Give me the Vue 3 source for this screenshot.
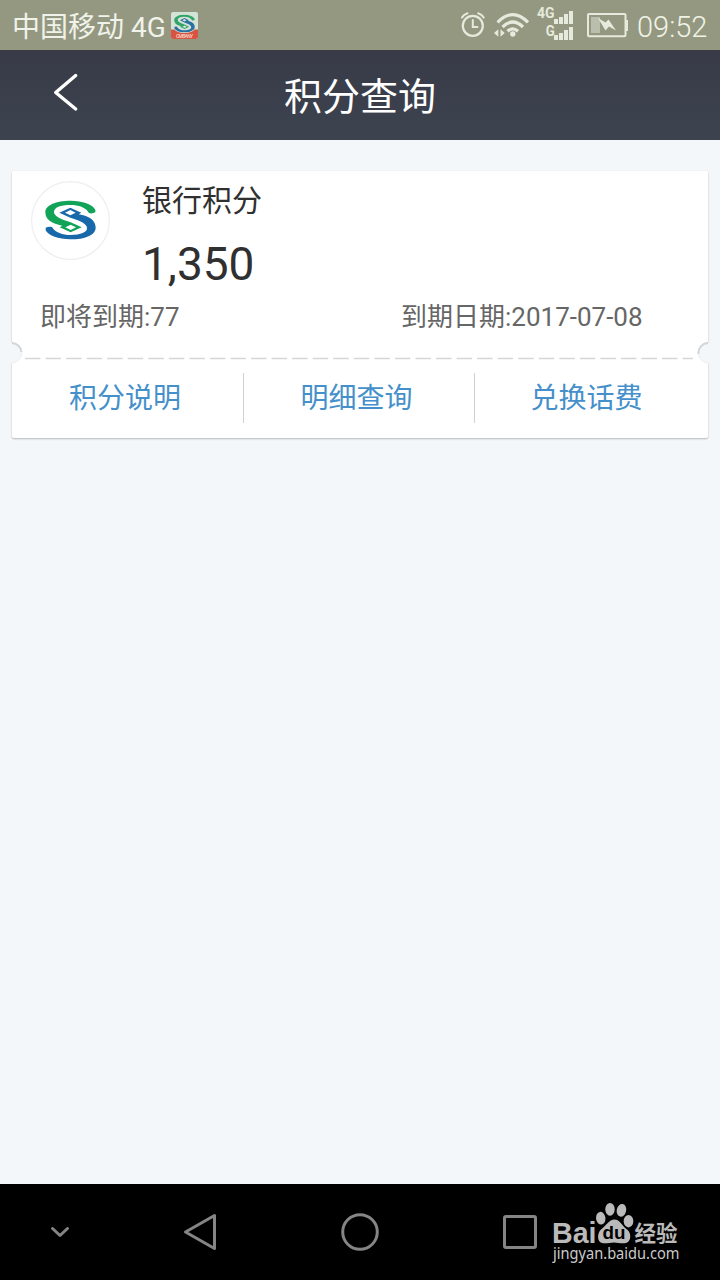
<script setup>
const links = ['积分说明', '明细查询', '兑换话费']
const bars = [5, 7, 10, 13]
const ribbon = 'M166 44V52Q156 57 147 54C137 37 115 30 92 30C60 30 42 38 42 50C42 64 62 71 78 77L92 82L125 97L92 112L59 97L67 92C36 87 16 74 16 52C16 30 48 17 92 17C128 17 157 28 166 44ZM92 89L76 97L92 105L108 97Z'
</script>

<template>
  <div class="screen">
    <header class="status">
      <span class="carrier">中国移动 4G</span>
      <svg class="app-icon" width="27" height="27" viewBox="0 0 27 27">
        <rect width="27" height="27" rx="2" fill="#d3e3d5" />
        <path d="M0 17.5H27V25a2 2 0 0 1-2 2H2a2 2 0 0 1-2-2z" fill="#d75442" />
        <ellipse cx="13.5" cy="17" rx="10" ry="4" fill="#d3e3d5" />
        <svg x="3" y="2.5" width="21" height="18" viewBox="14 15 155 120" preserveAspectRatio="none">
          <g v-for="(c, i) in ['#33a36c', '#2b6fa3']" :key="c" :fill="c" :transform="i ? 'rotate(180 91.5 75)' : ''">
            <path :d="ribbon" fill-rule="evenodd" />
          </g>
        </svg>
        <text x="13.5" y="25.7" text-anchor="middle" font-size="5" font-weight="500" fill="#ffd5c8" textLength="17">CMBANY</text>
      </svg>
      <svg class="indicators" width="174" height="50" viewBox="456 0 174 50" fill="none" stroke="#e6eadc">
        <g stroke-width="2.2" stroke-linecap="round">
          <circle cx="472.8" cy="25.8" r="10" />
          <path d="M472.8 20V27H477.5M462 17.5Q463.5 14.5 467.5 13.2M483.7 17.5Q482.2 14.5 478.2 13.2" stroke-width="2" />
        </g>
        <path d="M497.6 22.3Q512.7 7 528 22.3M502.5 27Q512.7 17 523 27M507.5 31.3Q512.7 26.5 518 31.3" stroke-width="3.2" />
        <circle cx="512.8" cy="34" r="2.7" fill="#e6eadc" stroke="none" />
        <path d="M494 33l4.3-3.7v7.4zM500.5 29.3l4.3 3.7-4.3 3.7z" fill="#e6eadc" stroke="none" />
        <g fill="#e6eadc" stroke="none" font-family="Roboto, sans-serif" font-weight="700">
          <text x="537" y="18" font-size="14" textLength="17.5" lengthAdjust="spacingAndGlyphs">4G</text>
          <text x="545.7" y="35.5" font-size="14" textLength="9" lengthAdjust="spacingAndGlyphs">G</text>
          <rect v-for="(h, i) in bars" :key="'a' + i" :x="554 + i * 5" :y="24 - h" width="4" :height="h" />
          <rect v-for="(h, i) in bars" :key="'b' + i" :x="554 + i * 5" :y="40 - h" width="4" :height="h" />
        </g>
        <rect x="588" y="14" width="37.5" height="22.3" rx="1" stroke-width="2" />
        <rect x="591" y="17" width="9" height="16" fill="#b9bfac" stroke="none" />
        <path d="M626 20H628V31H626z" fill="#e6eadc" stroke="none" />
        <path d="M598 18L605.5 22.5L608.5 19.5L616 30.5L609 26.5L605.5 30.5z" fill="#e6eadc" stroke="none" />
      </svg>
      <span class="time">09:52</span>
    </header>

    <nav class="title-bar">
      <svg class="back" width="30" height="42" viewBox="0 0 30 42" fill="none" stroke="#fff" stroke-width="3.4" stroke-linecap="round" stroke-linejoin="round">
        <path d="M24.7 4.5L4.7 21.5L24.7 38" />
      </svg>
      <h1>积分查询</h1>
    </nav>

    <main>
      <section class="card">
        <div class="summary">
          <svg class="logo" width="80" height="80" viewBox="0 0 80 80">
            <circle cx="39.5" cy="39.5" r="38.9" fill="#fff" stroke="#eee" stroke-width="1.2" />
            <svg x="9" y="14" width="60" height="50" viewBox="0 0 180 150">
              <g v-for="(c, i) in ['#11a357', '#1769aa']" :key="c" :fill="c" :transform="i ? 'rotate(180 91.5 75)' : ''">
                <path :d="ribbon" fill-rule="evenodd" />
              </g>
            </svg>
          </svg>
          <div class="points">
            <h2>银行积分</h2>
            <strong>1,350</strong>
          </div>
        </div>
        <div class="expiry">
          <span>即将到期:77</span>
          <span>到期日期:2017-07-08</span>
        </div>
        <svg class="tear" width="700" height="24" viewBox="0 0 700 24">
          <path d="M15 17.5H683" stroke="#d6d6d6" stroke-width="1.6" stroke-dasharray="15.5 5.05" />
          <g fill="#f3f7f9">
            <path d="M0 2H2A10 10 0 0 1 2 22H0z" />
            <path d="M700 2H698A10 10 0 0 0 698 22H700z" />
          </g>
          <g fill="none" stroke-width="2">
            <path d="M2 2A10 10 0 0 1 11.5 11M688.5 13A10 10 0 0 1 698 2" stroke="#d3d5d6" />
            <path d="M11.5 11A10 10 0 0 1 2 22M688.5 13A10 10 0 0 0 698 22" stroke="#edf0f1" stroke-width="1" />
          </g>
        </svg>
        <div class="links">
          <a v-for="link in links" :key="link">{{ link }}</a>
        </div>
      </section>
    </main>

    <footer>
      <svg width="720" height="96" viewBox="0 1184 720 96" fill="none" stroke="#858585" stroke-width="3" stroke-linejoin="round">
        <path d="M52.5 1228.5L60 1235.5L67.5 1228.5" stroke-linecap="round" />
        <path d="M185.5 1232L214.5 1215.5V1248.5z" />
        <circle cx="360" cy="1232" r="17.3" />
        <rect x="504.5" y="1216.5" width="31" height="31" rx="1.5" />
        <g fill="#bababa" stroke="none">
          <text x="552" y="1242.5" font-size="29.5" class="brand" textLength="44.5" lengthAdjust="spacingAndGlyphs">Bai</text>
          <ellipse cx="600.7" cy="1218.2" rx="4.7" ry="6.4" transform="rotate(-8 601 1218)" />
          <ellipse cx="610" cy="1209.3" rx="4.7" ry="6.4" />
          <ellipse cx="621.5" cy="1210.2" rx="4.7" ry="6.4" transform="rotate(12 621 1210)" />
          <ellipse cx="628.5" cy="1221.2" rx="4.8" ry="6.2" />
          <path d="M602 1243C597 1242 597 1233 601 1229.5C606 1226 609 1219.5 614.5 1219.5C620 1219.5 622 1226 627 1229.5C632 1233 631 1242 626 1243C622 1244 618 1242.5 614 1242.5C610 1242.5 606 1244 602 1243z" />
          <text x="602.5" y="1239.3" font-size="18" class="brand" fill="#000" textLength="23" lengthAdjust="spacingAndGlyphs">du</text>
          <text x="634.5" y="1240.5" font-size="22" class="brand" textLength="43" lengthAdjust="spacingAndGlyphs">经验</text>
          <text x="553" y="1259.3" font-size="15.5" class="url" fill="#cacaca" textLength="126.5" lengthAdjust="spacingAndGlyphs">jingyan.baidu.com</text>
        </g>
      </svg>
    </footer>
  </div>
</template>

<style>
body { margin: 0; }
</style>

<style scoped>
.screen {
  width: 720px;
  height: 1280px;
  display: flex;
  flex-direction: column;
  overflow: hidden;
  background: #f3f7f9;
  font-family: Roboto, "Noto Sans CJK SC", sans-serif;
}
.status {
  height: 50px;
  flex: none;
  display: flex;
  align-items: center;
  background: #949881;
  color: #f0f3e9;
  white-space: nowrap;
}
.carrier {
  width: 158px;
  padding: 6px 0 0 12px;
  font-size: 28px;
  line-height: 50px;
  font-weight: 400;
}
.app-icon { flex: none; margin: 0 0 0 1px; }
.indicators { flex: none; margin-left: 258px; }
.time { margin-left: 7px; padding-top: 3px; font-size: 29px; font-weight: 300; color: #f0f3e6; line-height: 50px; }
.title-bar {
  height: 90px;
  flex: none;
  display: grid;
  grid-template-columns: 100px 1fr 100px;
  align-items: center;
  background: linear-gradient(#383b47, #3c434f);
  color: #fff;
}
.back { margin: -6px 0 0 51px; }
h1 { margin: 0; padding-top: 4px; font-size: 38px; font-weight: 400; line-height: 86px; text-align: center; }
main { flex: 1; padding: 31px 12px 0 12px; }
.card {
  height: 267px;
  background: #fff;
  box-shadow: 0 1px 2px rgba(0, 0, 0, 0.26);
  border-radius: 2px;
}
.summary { display: flex; height: 126px; }
.logo { flex: none; margin: 10px 0 0 19px; }
.points { margin-left: 31px; color: #303030; }
h2 { margin: 9px 0 0; font-size: 30px; line-height: 42px; font-weight: 400; }
strong { display: block; font-size: 46px; line-height: 54px; font-weight: 400; margin-top: 15px; }
.expiry {
  display: grid;
  grid-template-columns: 361px 1fr;
  padding-left: 28px;
  height: 44px;
  font-size: 26px;
  line-height: 41px;
  color: #666;
}
.tear { display: block; margin: 0 -2px; }
.links { display: grid; grid-template-columns: 231px 231px 1fr; margin-top: 8px; }
.links a {
  height: 50px;
  line-height: 51px;
  font-size: 28px;
  text-align: center;
  color: #4590ca;
}
.links a + a { border-left: 1px solid #d0d0d0; }
.links a:first-child { padding-right: 5px; }
.links a:nth-child(2) { padding-right: 5px; }
.links a:last-child { padding-right: 10px; }
footer { height: 96px; flex: none; background: #000; }
footer svg { display: block; }
.brand { font-family: "Liberation Sans", "Noto Sans CJK SC", sans-serif; font-weight: 700; }
.url { font-family: "Noto Sans", sans-serif; }
</style>
